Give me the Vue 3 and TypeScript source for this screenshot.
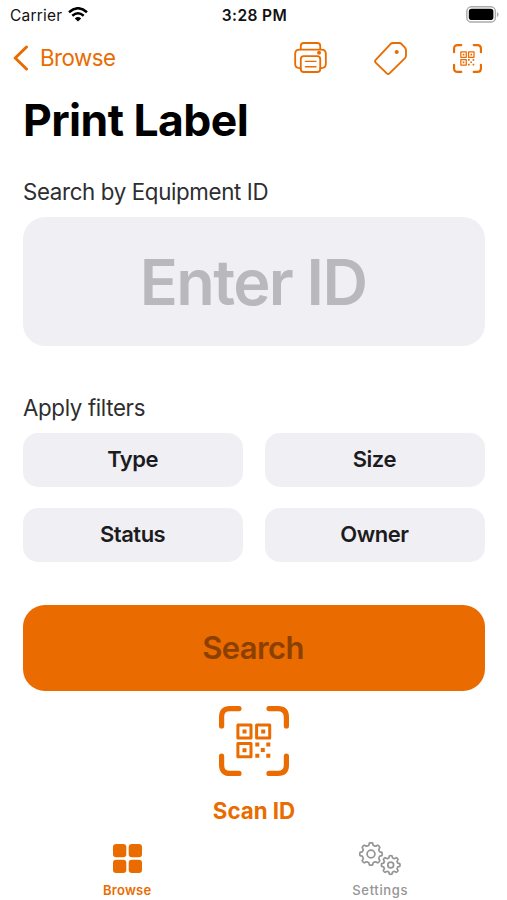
<script setup lang="ts">
interface Filter {
  id: string
  label: string
}

const filters: Filter[] = [
  { id: 'type', label: 'Type' },
  { id: 'size', label: 'Size' },
  { id: 'status', label: 'Status' },
  { id: 'owner', label: 'Owner' },
]

// Outline of an eight-toothed cog around (cx, cy), with rounded tooth corners
function cog(cx: number, cy: number, outer: number, inner: number): string {
  const steps = 128
  const mid = (outer + inner) / 2
  const depth = (outer - inner) / 2
  const points: string[] = []
  for (let i = 0; i < steps; i++) {
    const a = (i / steps) * Math.PI * 2
    const r = mid + depth * Math.tanh(3 * Math.cos(8 * a))
    points.push(`${(cx + r * Math.sin(a)).toFixed(2)} ${(cy - r * Math.cos(a)).toFixed(2)}`)
  }
  return `M${points.join('L')}Z`
}

const largeCog = cog(13, 13, 11.2, 8.8)
const smallCog = cog(32.7, 24, 9.3, 7.2)
</script>

<template>
  <div class="screen">
    <svg class="sprite" aria-hidden="true">
      <symbol id="qr-scan" viewBox="0 0 70 70">
        <g fill="none" stroke="currentColor">
          <path
            d="M2.6 20V11Q2.6 2.6 11 2.6H20M50 2.6H59Q67.4 2.6 67.4 11V20M67.4 50V59Q67.4 67.4 59 67.4H50M20 67.4H11Q2.6 67.4 2.6 59V50"
            stroke-width="5.2"
            stroke-linecap="round"
          />
          <path d="M18.9 18.9H32V32H18.9ZM37.6 18.9H50.7V32H37.6ZM18.9 37.6H32V50.7H18.9Z" stroke-width="3" stroke-linejoin="round" />
        </g>
        <path
          d="M23.5 23.5h4v4h-4zM42.2 23.5h4v4h-4zM23.5 42.2h4v4h-4zM36.3 36.5h4v4h-4zM47.3 36.5h4v4h-4zM41.8 42.1h4v4h-4zM36.3 47.7h4v4h-4zM47.3 47.7h4v4h-4z"
          fill="currentColor"
        />
      </symbol>
    </svg>

    <header class="status-bar">
      <div class="carrier">
        <span class="carrier-name">Carrier</span>
        <svg class="wifi" viewBox="0 0 20 15">
          <g fill="none" stroke="#000" stroke-width="2.5">
            <path d="M1 5.2Q10-2.7 19 5.2" />
            <path d="M4.3 8.8Q10 3.8 15.7 8.8" />
          </g>
          <path d="M6.8 11.4Q10 8.6 13.2 11.4L10 14.6Z" />
        </svg>
      </div>
      <span class="clock">3:28 PM</span>
      <svg class="battery" viewBox="0 0 33 17">
        <rect x=".8" y=".8" width="28.6" height="15.2" rx="4.6" fill="none" stroke="#aaa" stroke-width="1.4" />
        <rect x="2.8" y="2.8" width="24.6" height="11.2" rx="2.8" />
        <path d="M31 6v5q1.6-.7 1.6-2.5T31 6" fill="#aaa" />
      </svg>
    </header>

    <nav class="nav-bar">
      <a class="back">
        <svg class="chevron" viewBox="0 0 16 26">
          <path d="M13.5 2L2.2 13L13.5 24" fill="none" stroke="currentColor" stroke-width="3" stroke-linecap="round" stroke-linejoin="round" />
        </svg>
        <span class="back-label">Browse</span>
      </a>
      <div class="actions">
        <svg class="printer" viewBox="0 0 99 94">
          <g fill="none" stroke="currentColor" stroke-width="5.5" stroke-linecap="round" stroke-linejoin="round">
            <path d="M20 22V12Q20 3 29 3H70Q79 3 79 12V22" />
            <path d="M20 79H16Q3 79 3 66V36Q3 23 16 23H83Q96 23 96 36V66Q96 79 83 79H79" />
            <rect x="20" y="43" width="59" height="48" rx="9" />
            <path d="M34 59H66M34 75H66" stroke-width="4" />
          </g>
          <circle cx="75.5" cy="32.5" r="6" fill="currentColor" />
        </svg>
        <svg class="tag" viewBox="0 0 98 98">
          <path
            d="M49 6Q52 3 57 3H75Q79 3 82 6L92 17Q95 20 95 24V40Q95 45 92 48L46 93Q42 97 38 93L5 61Q1 57 5 53Z"
            fill="none"
            stroke="currentColor"
            stroke-width="5.5"
            stroke-linejoin="round"
          />
          <circle cx="67.5" cy="29.5" r="6" fill="currentColor" />
        </svg>
        <svg class="scan-small"><use href="#qr-scan" /></svg>
      </div>
    </nav>

    <main class="content">
      <h1 class="title">Print Label</h1>

      <p class="label search-label">Search by Equipment ID</p>
      <div class="id-field"><span class="placeholder">Enter ID</span></div>

      <p class="label filter-label">Apply filters</p>
      <div class="filters">
        <button v-for="filter in filters" :key="filter.id" class="filter" type="button">
          {{ filter.label }}
        </button>
      </div>

      <button class="search" type="button">Search</button>

      <div class="scan">
        <svg class="scan-large"><use href="#qr-scan" /></svg>
        <span class="scan-label">Scan ID</span>
      </div>
    </main>

    <footer class="tab-bar">
      <div class="tab active">
        <svg class="grid-icon" viewBox="0 0 29 29">
          <g fill="currentColor">
            <rect width="13.3" height="13.3" rx="3.2" />
            <rect x="15.7" width="13.3" height="13.3" rx="3.2" />
            <rect y="15.7" width="13.3" height="13.3" rx="3.2" />
            <rect x="15.7" y="15.7" width="13.3" height="13.3" rx="3.2" />
          </g>
        </svg>
        <span class="tab-label">Browse</span>
      </div>
      <div class="tab">
        <svg class="cogs" viewBox="0 0 44 35">
          <g fill="none" stroke="currentColor" stroke-width="1.7" stroke-linejoin="round">
            <path :d="largeCog" />
            <circle cx="13" cy="13" r="3.9" />
            <path :d="smallCog" />
            <circle cx="32.7" cy="24" r="2.9" />
          </g>
        </svg>
        <span class="tab-label settings-label">Settings</span>
      </div>
    </footer>
  </div>
</template>

<style>
body {
  margin: 0;
  background: #fff;
}
</style>

<style scoped>
.screen {
  --accent: #ea6b00;
  width: 507px;
  height: 900px;
  box-sizing: border-box;
  display: flex;
  flex-direction: column;
  overflow: hidden;
  background: #fff;
  color: #1c1c1e;
  font-family: Inter, 'Liberation Sans', sans-serif;
}
.sprite {
  position: absolute;
  width: 0;
  height: 0;
}
svg {
  display: block;
  flex: none;
}
span {
  white-space: nowrap;
}
button {
  border: 0;
  padding: 0;
  font: inherit;
  color: inherit;
}
.status-bar {
  height: 30px;
  display: grid;
  grid-template-columns: 1fr auto 1fr;
  align-items: center;
  padding: 0 8px 0 10px;
  color: #111;
}
.carrier {
  display: flex;
  align-items: center;
  gap: 6px;
}
.carrier-name {
  font-size: 15.5px;
  letter-spacing: 0.2px;
}
.wifi {
  width: 20px;
  height: 15px;
  margin-top: -1px;
}
.clock {
  font-size: 15.5px;
  font-weight: 600;
  letter-spacing: 0.4px;
}
.battery {
  width: 33px;
  height: 17px;
  margin-top: -2px;
  justify-self: end;
}
.nav-bar {
  height: 56px;
  display: flex;
  align-items: center;
  justify-content: space-between;
  padding: 0 25px 0 13px;
  color: var(--accent);
}
.back {
  display: flex;
  align-items: center;
  gap: 11px;
}
.chevron {
  width: 16px;
  height: 26px;
}
.back-label {
  font-size: 22.3px;
  letter-spacing: -0.5px;
  margin-top: -2px;
}
.actions {
  display: flex;
  align-items: center;
}
.printer {
  width: 33px;
  height: 31px;
  margin-top: -1px;
}
.tag {
  width: 33px;
  height: 33px;
  margin-left: 47px;
}
.scan-small {
  width: 29px;
  height: 29px;
  margin-left: 46px;
}
.content {
  padding: 0 22px 0 23px;
  display: flex;
  flex-direction: column;
}
.title {
  margin: 0;
  height: 68px;
  line-height: 68px;
  font-size: 44.5px;
  font-weight: 700;
  letter-spacing: -0.58px;
  color: #000;
  white-space: nowrap;
}
.label {
  margin: 0;
  font-size: 22.3px;
  line-height: 30px;
  letter-spacing: -0.35px;
  color: #2e2e30;
  white-space: nowrap;
}
.search-label {
  margin-top: 23px;
}
.id-field {
  height: 129px;
  margin-top: 10px;
  border-radius: 22px;
  background: #f0eff4;
  display: flex;
  align-items: center;
  justify-content: center;
}
.placeholder {
  font-size: 63px;
  font-weight: 600;
  letter-spacing: -1.6px;
  margin-right: 2px;
  color: #b9b8bd;
}
.filter-label {
  margin-top: 47px;
}
.filters {
  margin-top: 9.5px;
  display: grid;
  grid-template-columns: 1fr 1fr;
  gap: 21.5px;
}
.filter {
  height: 54px;
  border-radius: 15px;
  background: #f0eff4;
  font-size: 22px;
  font-weight: 600;
  letter-spacing: -0.5px;
  padding: 0 1px 2px 0;
}
.search {
  height: 86px;
  margin-top: 43px;
  border-radius: 22px;
  background: var(--accent);
  color: #8c4000;
  font-size: 31px;
  font-weight: 600;
  letter-spacing: -0.6px;
  padding: 0 2px 1px 0;
}
.scan {
  margin-top: 15px;
  display: flex;
  flex-direction: column;
  align-items: center;
  color: var(--accent);
}
.scan-large {
  width: 70px;
  height: 70px;
}
.scan-label {
  margin-top: 20px;
  font-size: 22.3px;
  font-weight: 700;
  line-height: 30px;
}
.tab-bar {
  margin-top: auto;
  height: 60px;
  display: grid;
  grid-template-columns: 1fr 1fr;
}
.tab {
  display: flex;
  flex-direction: column;
  align-items: center;
  color: #959595;
}
.active {
  color: var(--accent);
}
.grid-icon {
  width: 29px;
  height: 29px;
  margin: 4px 0 0 1px;
}
.cogs {
  width: 44px;
  height: 35px;
  margin-top: 1px;
}
.tab-label {
  margin: 8px 0 0 1px;
  font-size: 13px;
  font-weight: 600;
  line-height: 18px;
  letter-spacing: 0.25px;
}
.settings-label {
  margin: 5px 0 0;
  font-weight: 500;
  letter-spacing: 0.65px;
}
</style>
